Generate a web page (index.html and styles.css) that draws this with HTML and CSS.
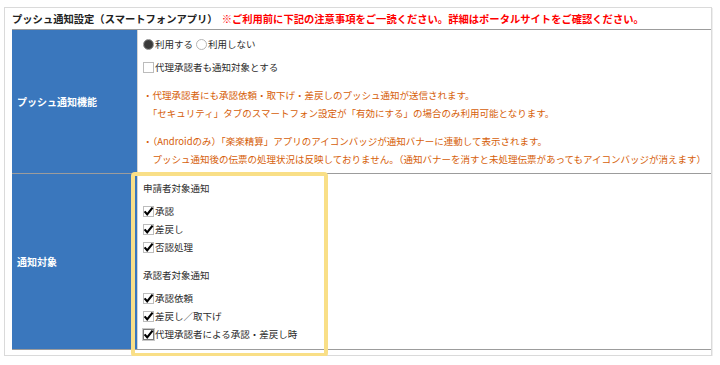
FILE: index.html
```html
<!DOCTYPE html>
<html lang="ja">
<head>
  <meta charset="UTF-8">
  <title>プッシュ通知設定</title>
  <link rel="stylesheet" href="styles.css">
</head>
<body>

<div class="panel">
  <div class="panel-title">プッシュ通知設定（スマートフォンアプリ）<span class="notice">※ご利用前に下記の注意事項をご一読ください。詳細はポータルサイトをご確認ください。</span></div>

  <div class="settings">
    <div class="setting-row">
      <div class="setting-label">プッシュ通知機能</div>
      <div class="setting-value">
        <div class="opt-line">
          <label class="radio"><span class="radio-mark on"></span>利用する</label>
          <label class="radio"><span class="radio-mark"></span>利用しない</label>
        </div>
        <div class="opt-line spaced">
          <label class="check"><span class="box"></span>代理承認者も通知対象とする</label>
        </div>
        <p class="note">・代理承認者にも承認依頼・取下げ・差戻しのプッシュ通知が送信されます。<br>　「セキュリティ」タブのスマートフォン設定が「有効にする」の場合のみ利用可能となります。</p>
        <p class="note">・（Androidのみ）「楽楽精算」アプリのアイコンバッジが通知バナーに連動して表示されます。<br>　プッシュ通知後の伝票の処理状況は反映しておりません。（通知バナーを消すと未処理伝票があってもアイコンバッジが消えます）</p>
      </div>
    </div>

    <div class="setting-row">
      <div class="setting-label">通知対象</div>
      <div class="setting-value targets">
        <div class="group">
          <div class="group-title">申請者対象通知</div>
          <label class="check"><span class="box"><svg viewBox="0 0 11 11" width="11" height="11"><path d="M1.6 5.4 L4.2 8.4 L9.6 1.6" fill="none" stroke="#000" stroke-width="2.2"/></svg></span>承認</label>
          <label class="check"><span class="box"><svg viewBox="0 0 11 11" width="11" height="11"><path d="M1.6 5.4 L4.2 8.4 L9.6 1.6" fill="none" stroke="#000" stroke-width="2.2"/></svg></span>差戻し</label>
          <label class="check"><span class="box"><svg viewBox="0 0 11 11" width="11" height="11"><path d="M1.6 5.4 L4.2 8.4 L9.6 1.6" fill="none" stroke="#000" stroke-width="2.2"/></svg></span>否認処理</label>
        </div>
        <div class="group">
          <div class="group-title">承認者対象通知</div>
          <label class="check"><span class="box"><svg viewBox="0 0 11 11" width="11" height="11"><path d="M1.6 5.4 L4.2 8.4 L9.6 1.6" fill="none" stroke="#000" stroke-width="2.2"/></svg></span>承認依頼</label>
          <label class="check"><span class="box"><svg viewBox="0 0 11 11" width="11" height="11"><path d="M1.6 5.4 L4.2 8.4 L9.6 1.6" fill="none" stroke="#000" stroke-width="2.2"/></svg></span>差戻し／取下げ</label>
          <label class="check"><span class="box focus"><svg viewBox="0 0 11 11" width="11" height="11"><path d="M1.6 5.4 L4.2 8.4 L9.6 1.6" fill="none" stroke="#000" stroke-width="2.2"/></svg></span>代理承認者による承認・差戻し時</label>
        </div>
      </div>
    </div>
  </div>

  <!-- highlight frame over the notification targets -->
  <div class="highlight"></div>
</div>

</body>
</html>
```

FILE: styles.css
```css
:root {
  --label-blue: #3a77bd;
  --line-color: #9c9c9c;
  --note-color: #d65e08;
}

body {
  margin: 0;
  background: #fff;
  color: #2b2b2b;
  font-family: "Noto Sans CJK JP", "Noto Sans", sans-serif;
  font-size: 9.5px;
}

.panel {
  position: relative;
  width: 706px;
  margin: 7px 0 0 4px;
  padding-bottom: 5px;
  border: 1px solid #dadada;
  box-shadow: 1px 1px 0 #eee;
}

.panel-title {
  height: 21px;
  line-height: 21px;
  padding-left: 7px;
  font-size: 10.3px;
  font-weight: bold;
  color: #222;
  white-space: nowrap;
}

.notice {
  color: #f00;
  margin-left: 4px;
}

.settings {
  margin-left: 7px;
  border-top: 1px solid var(--line-color);
}

.setting-row {
  display: grid;
  grid-template-columns: 125px 1fr;
  border-bottom: 1px solid var(--line-color);
}

.setting-label {
  display: flex;
  align-items: center;
  padding-left: 5px;
  background: var(--label-blue);
  color: #fff;
  font-size: 10px;
  font-weight: bold;
}

.setting-value {
  border-left: 1px solid #d4d4d4;
  padding: 5px;
}

.opt-line {
  display: flex;
  align-items: center;
  gap: 3px;
  height: 18px;
  margin-bottom: 5px;
}

.opt-line.spaced {
  margin-bottom: 10px;
}

.note {
  margin: 0 0 10px;
  line-height: 18px;
  color: var(--note-color);
  white-space: nowrap;
}

.note:last-child {
  margin-bottom: 0;
}

.radio,
.check {
  display: flex;
  align-items: center;
  gap: 1px;
  height: 18px;
}

.radio-mark {
  width: 11px;
  height: 11px;
  box-sizing: border-box;
  border: 1px solid #b5b5b5;
  border-radius: 50%;
  background: #fff;
}

.radio-mark.on {
  border-color: #8a8a8a;
  background: radial-gradient(circle, #3a3a3a 0 55%, #6e6e6e 100%);
}

.box {
  width: 11px;
  height: 11px;
  box-sizing: border-box;
  border: 1px solid #bcbcbc;
  background: #fff;
}

.box svg {
  display: block;
  margin: -1px 0 0 -1px;
  overflow: visible;
}

.box.focus {
  border: 1px solid #7a7a7a;
  box-shadow: 0 0 0 1px #c8c8c8;
}

.targets {
  padding-bottom: 6px;
}

.group {
  margin-bottom: 10px;
}

.group:last-child {
  margin-bottom: 0;
}

.group-title {
  height: 18px;
  line-height: 18px;
  margin-bottom: 5px;
}

.highlight {
  position: absolute;
  left: 126px;
  top: 164px;
  width: 197px;
  height: 185px;
  box-sizing: border-box;
  border: 4px solid #f9df87;
  border-radius: 4px;
  pointer-events: none;
}
```
